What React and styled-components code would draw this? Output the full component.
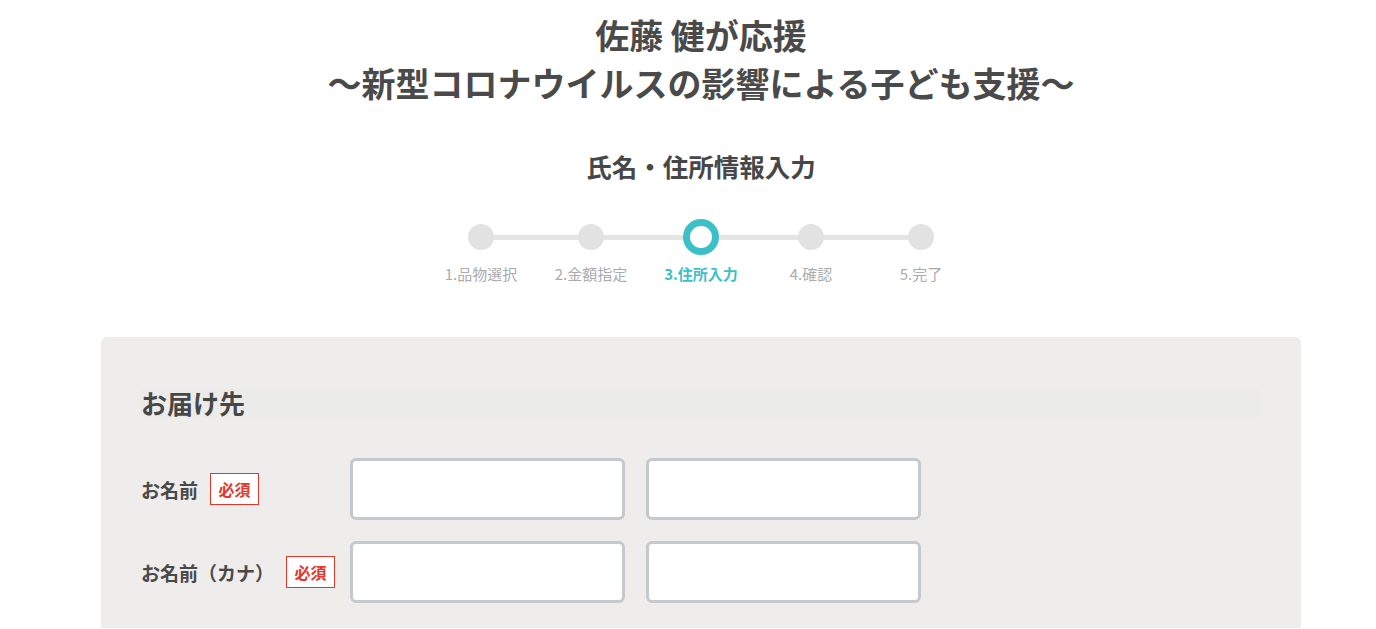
import React from "react";
import styled, { createGlobalStyle } from "styled-components";

const Global = createGlobalStyle`
  html, body { margin: 0; padding: 0; background: #fff; }
  body { font-family: "Noto Sans CJK JP", "Noto Sans", sans-serif; color: #474747; }
  * { box-sizing: border-box; }
`;

const Page = styled.div`
  height: 629px;
  overflow: hidden;
  padding: 11px 0 0 26px;
`;

const Title = styled.h1`
  margin: 0;
  text-align: center;
  font-size: 34px;
  line-height: 48px;
  font-weight: 700;
  color: #4a4a4a;
`;

const SubTitle = styled.h2`
  margin: 41px 0 0;
  text-align: center;
  font-size: 25.5px;
  line-height: 36px;
  font-weight: 700;
  color: #474747;
`;

const Stepper = styled.ol`
  list-style: none;
  margin: 35px auto 0;
  padding: 0;
  display: flex;
  justify-content: center;
`;

const Step = styled.li`
  width: 110px;
  display: flex;
  flex-direction: column;
  align-items: center;
`;

const Track = styled.div`
  height: 36px;
  width: 100%;
  display: flex;
  align-items: center;
  justify-content: center;
  position: relative;
  &::before {
    content: "";
    position: absolute;
    top: 16px;
    height: 5px;
    background: #e5e5e5;
    left: ${(p) => (p.$first ? "50%" : "0")};
    right: ${(p) => (p.$last ? "50%" : "0")};
  }
`;

const Dot = styled.span`
  position: relative;
  z-index: 1;
  width: ${(p) => (p.$active ? "36px" : "26px")};
  height: ${(p) => (p.$active ? "36px" : "26px")};
  border-radius: 50%;
  background: ${(p) => (p.$active ? "#fff" : "#e2e2e2")};
  border: ${(p) => (p.$active ? "7px solid #3cbfc7" : "none")};
`;

const StepLabel = styled.span`
  margin-top: 9px;
  font-size: 15px;
  line-height: 20px;
  white-space: nowrap;
  font-weight: ${(p) => (p.$active ? 700 : 400)};
  color: ${(p) => (p.$active ? "#3cbfc7" : "#ababab")};
`;

const Panel = styled.section`
  width: 1200px;
  margin: 53px auto 0;
  background: #eeedeb;
  border-radius: 6px 6px 0 0;
  padding: 52px 40px 25px;
`;

const SectionHead = styled.h3`
  margin: 0;
  height: 28px;
  line-height: 28px;
  font-size: 26px;
  font-weight: 700;
  color: #474747;
  background: #ebebea;
`;

const Rows = styled.div`
  margin-top: 41px;
  display: flex;
  flex-direction: column;
  gap: 21px;
`;

const Row = styled.div`
  display: flex;
  align-items: center;
`;

const LabelCol = styled.div`
  width: 209px;
  display: flex;
  align-items: center;
  gap: 12px;
`;

const Label = styled.span`
  font-size: 19px;
  font-weight: 700;
  color: #4a4a4a;
  white-space: nowrap;
`;

const Required = styled.span`
  width: 49px;
  height: 32px;
  flex: none;
  display: flex;
  align-items: center;
  justify-content: center;
  border: 1px solid #e4372c;
  background: #fff;
  color: #e4372c;
  font-size: 16px;
  font-weight: 700;
`;

const Inputs = styled.div`
  display: flex;
  gap: 21px;
`;

const Input = styled.input`
  width: 275px;
  height: 62px;
  border: 3px solid #c4c8cf;
  border-radius: 6px;
  background: #fff;
  font-size: 16px;
  padding: 0 12px;
  outline: none;
`;

const steps = ["1.品物選択", "2.金額指定", "3.住所入力", "4.確認", "5.完了"];

export default function App() {
  return (
    <>
      <Global />
      <Page>
        <Title>
          佐藤 健が応援
          <br />
          ～新型コロナウイルスの影響による子ども支援～
        </Title>
        <SubTitle>氏名・住所情報入力</SubTitle>
        <Stepper>
          {steps.map((s, i) => (
            <Step key={s}>
              <Track $first={i === 0} $last={i === steps.length - 1}>
                <Dot $active={i === 2} />
              </Track>
              <StepLabel $active={i === 2}>{s}</StepLabel>
            </Step>
          ))}
        </Stepper>
        <Panel>
          <SectionHead>お届け先</SectionHead>
          <Rows>
            <Row>
              <LabelCol>
                <Label>お名前</Label>
                <Required>必須</Required>
              </LabelCol>
              <Inputs>
                <Input />
                <Input />
              </Inputs>
            </Row>
            <Row>
              <LabelCol>
                <Label>お名前（カナ）</Label>
                <Required>必須</Required>
              </LabelCol>
              <Inputs>
                <Input />
                <Input />
              </Inputs>
            </Row>
          </Rows>
        </Panel>
      </Page>
    </>
  );
}
